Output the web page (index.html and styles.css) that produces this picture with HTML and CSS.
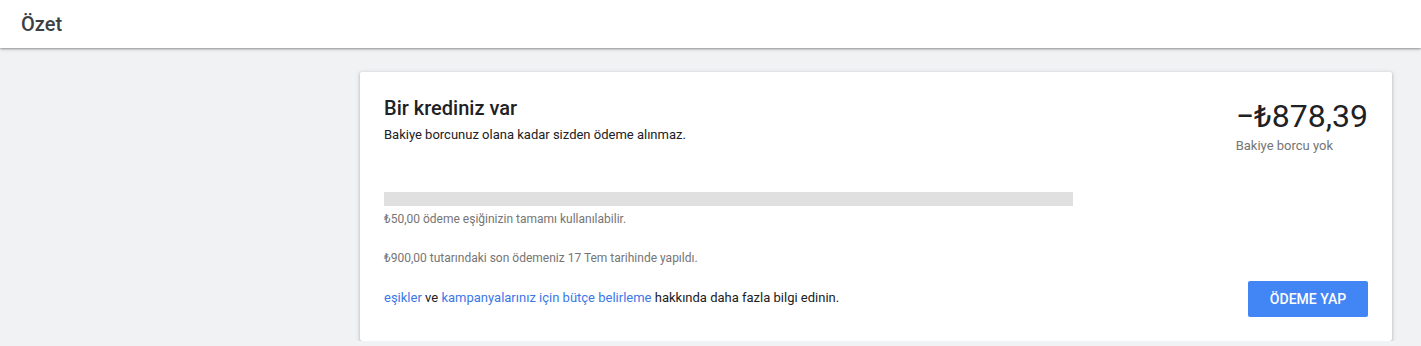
FILE: index.html
```html
<!DOCTYPE html>
<html lang="tr">
<head>
    <meta charset="UTF-8">
    <title>Özet</title>
    <link rel="stylesheet" href="styles.css">
</head>
<body>
<div id="header">
    <div class="pagetitle">Özet</div>
</div>
<div id="container">
    <div class="card">
        <div class="toprow">
            <div class="leftinfo">
                <div class="cardtitle">Bir krediniz var</div>
                <div class="subtitle">Bakiye borcunuz olana kadar sizden ödeme alınmaz.</div>
            </div>
            <div class="rightinfo">
                <div class="amount">−₺878,39</div>
                <div class="caption">Bakiye borcu yok</div>
            </div>
        </div>
        <div class="bar"></div>
        <div class="note first">₺50,00 ödeme eşiğinizin tamamı kullanılabilir.</div>
        <div class="note second">₺900,00 tutarındaki son ödemeniz 17 Tem tarihinde yapıldı.</div>
        <div class="footer">
            <div class="learn">
                <a href="#" class="link">eşikler</a> ve <a href="#" class="link">kampanyalarınız için bütçe belirleme</a> hakkında daha fazla bilgi edinin.
            </div>
            <div class="paybutton">ÖDEME YAP</div>
        </div>
    </div>
</div>
</body>
</html>
```

FILE: styles.css
```css
body {
    margin: 0;
    background-color: #f1f2f4;
    font-family: Roboto, "Liberation Sans", Arial, sans-serif;
    color: #202124;
}

#header {
    height: 48px;
    background-color: #ffffff;
    box-shadow: 0 1px 2px rgba(0, 0, 0, 0.35), 0 2px 4px rgba(0, 0, 0, 0.08);
    position: relative;
    z-index: 1;
    display: flex;
    align-items: center;
}

.pagetitle {
    margin-left: 21px;
    font-size: 20px;
    font-weight: 500;
    color: #3c4043;
    margin-top: -1px;
}

#container {
    padding-top: 24px;
    padding-left: 360px;
}

.card {
    width: 984px;
    padding: 24px;
    background-color: #ffffff;
    border-radius: 2px;
    box-shadow: 0 1px 2px rgba(60, 64, 67, 0.3), 0 1px 4px 1px rgba(60, 64, 67, 0.15);
}

.toprow {
    display: flex;
    justify-content: space-between;
}

.cardtitle {
    font-size: 20px;
    font-weight: 500;
    line-height: 24px;
}

.subtitle {
    margin-top: 5px;
    font-size: 13px;
    line-height: 20px;
}

.amount {
    font-size: 32px;
    line-height: 40px;
}

.caption {
    font-size: 13px;
    line-height: 20px;
    color: #757575;
}

.bar {
    margin-top: 36px;
    width: 689px;
    height: 14px;
    background-color: #e0e0e0;
}

.note {
    font-size: 12px;
    line-height: 16px;
    color: #757575;
}

.first {
    margin-top: 5px;
}

.second {
    margin-top: 23px;
}

.footer {
    margin-top: 15px;
    display: flex;
    justify-content: space-between;
    align-items: center;
}

.learn {
    font-size: 13px;
    line-height: 20px;
    margin-top: -3px;
}

.link {
    color: #3b78e7;
    text-decoration: none;
}

.paybutton {
    width: 120px;
    height: 36px;
    line-height: 36px;
    text-align: center;
    background-color: #4285f4;
    color: #ffffff;
    font-size: 14px;
    font-weight: 500;
    border-radius: 2px;
}

.paybutton:hover {
    cursor: pointer;
}
```
